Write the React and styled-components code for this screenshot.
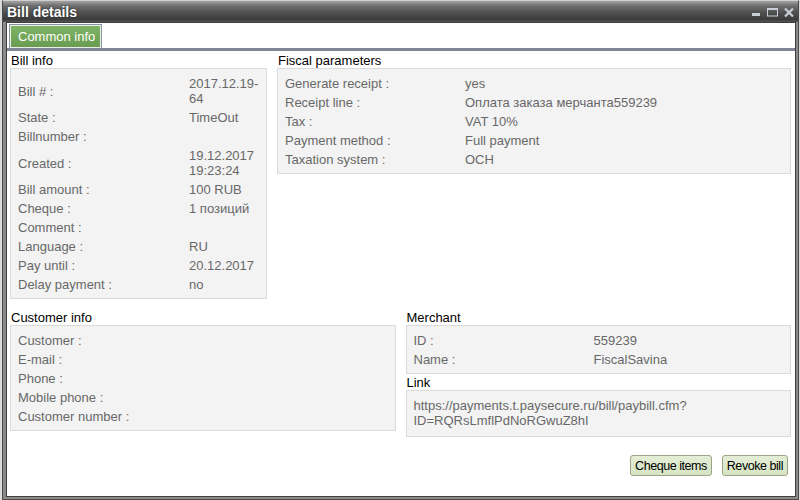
import React from 'react';
import styled, { createGlobalStyle } from 'styled-components';

const GlobalStyle = createGlobalStyle`
	html, body {
		margin: 0;
		padding: 0;
		background: #dcdcdc;
	}
	body {
		font-family: "Liberation Sans", Arial, sans-serif;
	}
`;

const billInfo = [
	['Bill # :', '2017.12.19-64'],
	['State :', 'TimeOut'],
	['Billnumber :', ''],
	['Created :', '19.12.2017 19:23:24'],
	['Bill amount :', '100 RUB'],
	['Cheque :', '1 позиций'],
	['Comment :', ''],
	['Language :', 'RU'],
	['Pay until :', '20.12.2017'],
	['Delay payment :', 'no'],
];

const fiscal = [
	['Generate receipt :', 'yes'],
	['Receipt line :', 'Оплата заказа мерчанта559239'],
	['Tax :', 'VAT 10%'],
	['Payment method :', 'Full payment'],
	['Taxation system :', 'OCH'],
];

const customer = [
	['Customer :', ''],
	['E-mail :', ''],
	['Phone :', ''],
	['Mobile phone :', ''],
	['Customer number :', ''],
];

const merchant = [
	['ID :', '559239'],
	['Name :', 'FiscalSavina'],
];

function InfoRows({ rows, labelWidth }) {
	return (
		<Rows $labelWidth={labelWidth}>
			{rows.map(([label, value]) => (
				<React.Fragment key={label}>
					<Cell>{label}</Cell>
					<Cell>{value}</Cell>
				</React.Fragment>
			))}
		</Rows>
	);
}

function App() {
	return (
		<>
			<GlobalStyle />
			<Window>
				<TitleBar>
					<Title>Bill details</Title>
					<Controls>
						<svg width="9" height="9" viewBox="0 0 9 9">
							<rect x="0" y="5" width="8" height="3" fill="#c9ced6" />
						</svg>
						<svg width="11" height="9" viewBox="0 0 11 9">
							<rect x="0.5" y="0.5" width="10" height="7.5" fill="none" stroke="#c9ced6" />
							<rect x="0" y="0" width="11" height="2" fill="#c9ced6" />
						</svg>
						<svg width="10" height="9" viewBox="0 0 10 9">
							<path d="M1 0.5 L9 8.5 M9 0.5 L1 8.5" stroke="#c9ced6" strokeWidth="2.2" />
						</svg>
					</Controls>
				</TitleBar>
				<Content>
					<TabStrip>
						<Tab>Common info</Tab>
					</TabStrip>
					<Body>
						<TopGrid>
							<Section>
								<Heading>Bill info</Heading>
								<Panel $padRight={5}>
									<InfoRows rows={billInfo} labelWidth={171} />
								</Panel>
							</Section>
							<Section>
								<Heading>Fiscal parameters</Heading>
								<Panel>
									<InfoRows rows={fiscal} labelWidth={180} />
								</Panel>
							</Section>
						</TopGrid>
						<BottomGrid>
							<Section>
								<Heading>Customer info</Heading>
								<Panel>
									<InfoRows rows={customer} labelWidth={180} />
								</Panel>
							</Section>
							<Section>
								<Heading>Merchant</Heading>
								<Panel>
									<InfoRows rows={merchant} labelWidth={180} />
								</Panel>
								<Heading $gap={2}>Link</Heading>
								<Panel>
									<LinkText>
										https://payments.t.paysecure.ru/bill/paybill.cfm?
										<br />
										ID=RQRsLmflPdNoRGwuZ8hI
									</LinkText>
								</Panel>
							</Section>
						</BottomGrid>
						<Actions>
							<Button type="button">Cheque items</Button>
							<Button type="button">Revoke bill</Button>
						</Actions>
					</Body>
				</Content>
			</Window>
		</>
	);
}

const Window = styled.div`
	box-sizing: border-box;
	margin-left: 2px;
	width: 797px;
	height: 500px;
	display: flex;
	flex-direction: column;
	background: #8a8a8a;
	border: 1px solid #4a4a4a;
	border-top-color: #d0d0d0;
	padding: 0 2px 2px 3px;
`;

const TitleBar = styled.div`
	height: 21px;
	margin: 0 -2px 0 -3px;
	padding: 0 4px 0 4px;
	display: flex;
	align-items: center;
	justify-content: space-between;
	background: linear-gradient(#a3a3a3 0%, #707070 22%, #505050 55%, #3c3c3c 88%, #555 100%);
`;

const Title = styled.span`
	color: #fff;
	font-weight: bold;
	font-size: 14px;
	text-shadow: 0 0 2px #222;
`;

const Controls = styled.div`
	display: flex;
	align-items: center;
	gap: 6px;
	padding-top: 1px;
`;

const Content = styled.div`
	flex: 1;
	display: flex;
	flex-direction: column;
	background: #fff;
	border: 1px solid #3e3e3e;
`;

const TabStrip = styled.div`
	display: flex;
	padding: 1px 0 0 2px;
	border-bottom: 3px solid #7d8596;
`;

const Tab = styled.div`
	height: 23px;
	padding: 0 6px 0 8px;
	display: flex;
	align-items: center;
	color: #fff;
	font-size: 13px;
	background: linear-gradient(#80b466, #689b50);
	border: 1px solid #8a93a6;
	border-bottom: none;
	box-shadow: inset 0 0 0 1px #e8efe4;
`;

const Body = styled.div`
	flex: 1;
	padding: 3px 4px 0 3px;
	font-size: 13px;
`;

const TopGrid = styled.div`
	display: grid;
	grid-template-columns: 257px 1fr;
	gap: 10px;
	align-items: start;
`;

const BottomGrid = styled.div`
	display: grid;
	grid-template-columns: 1fr 1fr;
	gap: 10px;
	align-items: start;
	margin-top: 12px;
`;

const Section = styled.div`
	display: flex;
	flex-direction: column;
`;

const Heading = styled.div`
	color: #000;
	line-height: 14px;
	padding-left: 1px;
	margin-top: ${(p) => p.$gap || 0}px;
`;

const Panel = styled.div`
	background: #f3f3f3;
	border: 1px solid #dadada;
	padding: 5px ${(p) => p.$padRight || 7}px 4px 7px;
`;

const Rows = styled.div`
	display: grid;
	grid-template-columns: ${(p) => p.$labelWidth}px 1fr;
	line-height: 15px;
	color: #686868;
`;

const Cell = styled.div`
	padding: 2px 0;
	min-height: 15px;
	display: flex;
	align-items: center;
`;

const LinkText = styled.div`
	padding: 2px 0 4px;
	line-height: 15px;
	color: #686868;
`;

const Actions = styled.div`
	display: flex;
	justify-content: flex-end;
	gap: 10px;
	margin-top: 18px;
	padding-right: 3px;
`;

const Button = styled.button`
	height: 21px;
	padding: 0 4px;
	font-family: "Liberation Sans", Arial, sans-serif;
	font-size: 12.5px;
	letter-spacing: -0.45px;
	color: #000;
	background: linear-gradient(#e4eed6, #d6e4c3);
	border: 1px solid #9ea386;
	border-radius: 3px;
`;

export default App;
